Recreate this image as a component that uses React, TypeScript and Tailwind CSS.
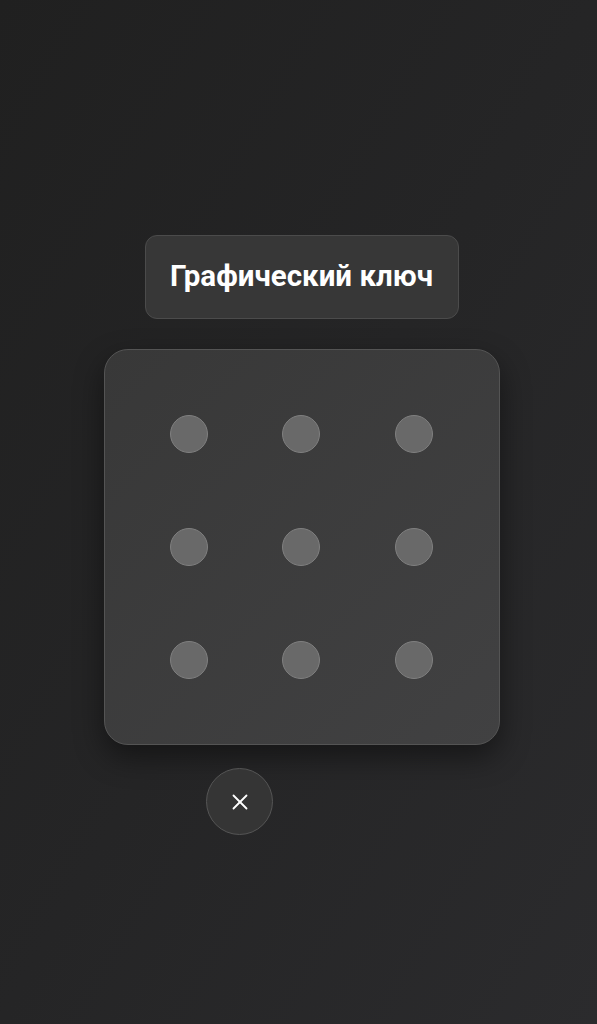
import { X } from 'lucide-react';

export default function App() {
  const dots = Array.from({ length: 9 });

  return (
    <div className="min-h-[1024px] w-full bg-gradient-to-br from-[#202020] via-[#252526] to-[#2b2b2d] font-['Roboto',sans-serif] flex flex-col">
      <div className="flex flex-col items-center pt-[235px] pl-[6px]">
        {/* Title */}
        <div className="w-[314px] h-[84px] rounded-[12px] bg-[#373737] border border-[#4b4b4b] flex items-center justify-center">
          <span className="text-white font-bold text-[29.5px] leading-none">Графический ключ</span>
        </div>

        {/* Pattern grid */}
        <div className="mt-[30px] w-[396px] h-[396px] rounded-[24px] bg-gradient-to-br from-[#383838] to-[#414142] border border-[#545454] shadow-[0_12px_30px_rgba(0,0,0,0.45)] grid grid-cols-3 grid-rows-3 p-[28px]">
          {dots.map((_, i) => (
            <div key={i} className="flex items-center justify-center">
              <div className="w-[38px] h-[38px] rounded-full bg-[#696969] border border-[#808080]" />
            </div>
          ))}
        </div>
      </div>

      {/* Close */}
      <div className="mt-[23px] pl-[206px]">
        <button className="w-[67px] h-[67px] rounded-full bg-[#353535] border border-[#555555] flex items-center justify-center">
          <X className="w-[26px] h-[26px] text-white" strokeWidth={1.7} />
        </button>
      </div>
    </div>
  );
}
